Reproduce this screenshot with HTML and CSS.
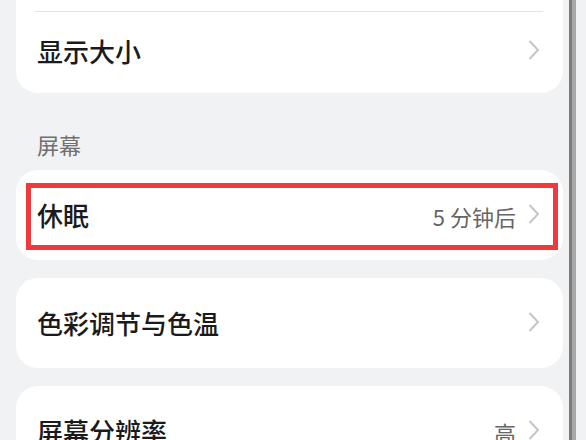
FILE: index.html
```html
<!DOCTYPE html>
<html lang="zh-CN">
<head>
<meta charset="utf-8">
<title>显示设置</title>
<link rel="stylesheet" href="styles.css">
</head>
<body>
<div class="page">
  <main class="content">
    <section class="card card-first">
      <div class="row row-hidden"></div>
      <div class="divider"></div>
      <div class="row">
        <span class="label">显示大小</span>
        <span class="trail">
          <svg class="chev" viewBox="0 0 12 20" width="12" height="20"><path d="M2 1.5 L10 10 L2 18.5"/></svg>
        </span>
      </div>
    </section>

    <h2 class="group-title">屏幕</h2>

    <section class="card card-marked">
      <div class="row">
        <span class="label">休眠</span>
        <span class="trail">
          <span class="value">5 分钟后</span>
          <svg class="chev" viewBox="0 0 12 20" width="12" height="20"><path d="M2 1.5 L10 10 L2 18.5"/></svg>
        </span>
      </div>
      <div class="mark"></div>
    </section>

    <section class="card">
      <div class="row">
        <span class="label">色彩调节与色温</span>
        <span class="trail">
          <svg class="chev" viewBox="0 0 12 20" width="12" height="20"><path d="M2 1.5 L10 10 L2 18.5"/></svg>
        </span>
      </div>
    </section>

    <section class="card">
      <div class="row">
        <span class="label">屏幕分辨率</span>
        <span class="trail">
          <span class="value">高</span>
          <svg class="chev" viewBox="0 0 12 20" width="12" height="20"><path d="M2 1.5 L10 10 L2 18.5"/></svg>
        </span>
      </div>
    </section>
  </main>
  <div class="scrollbar"></div>
</div>
</body>
</html>
```

FILE: styles.css
```css
* { box-sizing: border-box; }

html, body {
  margin: 0;
  padding: 0;
  width: 586px;
  height: 440px;
  overflow: hidden;
  background: #f1f2f4;
  font-family: "Noto Sans CJK SC", "Noto Sans", sans-serif;
}

.page {
  display: flex;
  height: 440px;
}

.content {
  width: 547px;
  margin-left: 16px;
  display: flex;
  flex-direction: column;
}

.scrollbar {
  width: 7px;
  height: 440px;
  margin-left: 6px;
  background: #a9a9a9;
  border-left: 3px solid #7c7c7c;
}

.card {
  background: #ffffff;
  border-radius: 22px;
  position: relative;
  flex-shrink: 0;
  margin-bottom: 18px;
}

.card-first {
  margin-top: -70px;
  margin-bottom: 0;
}

.row {
  height: 90px;
  display: flex;
  align-items: center;
  justify-content: space-between;
  padding: 0 23px 0 21px;
}

.card-first .row { height: 81px; padding-bottom: 3px; }
.card-first .row-hidden { height: 81px; }

.divider {
  height: 1px;
  background: #e4e5e7;
  margin: 0 20px 0 19px;
}

.label {
  font-size: 26px;
  font-weight: 500;
  color: #1b1b1b;
  line-height: 30px;
}

.trail {
  display: flex;
  align-items: center;
  gap: 12px;
}

.value {
  font-size: 22px;
  color: #666666;
  line-height: 28px;
  margin-top: 1px;
}

.chev {
  display: block;
  margin-top: -2px;
}

.chev path {
  fill: none;
  stroke: #c6c6c6;
  stroke-width: 2;
  stroke-linecap: round;
  stroke-linejoin: round;
}

.group-title {
  margin: 0;
  padding: 36px 0 11px 21px;
  height: 77px;
  font-size: 22px;
  font-weight: normal;
  line-height: 30px;
  color: #707070;
}

.mark {
  position: absolute;
  left: 10px;
  top: 13px;
  right: 5px;
  bottom: 10px;
  border: 5px solid #ef393c;
  pointer-events: none;
}
```
